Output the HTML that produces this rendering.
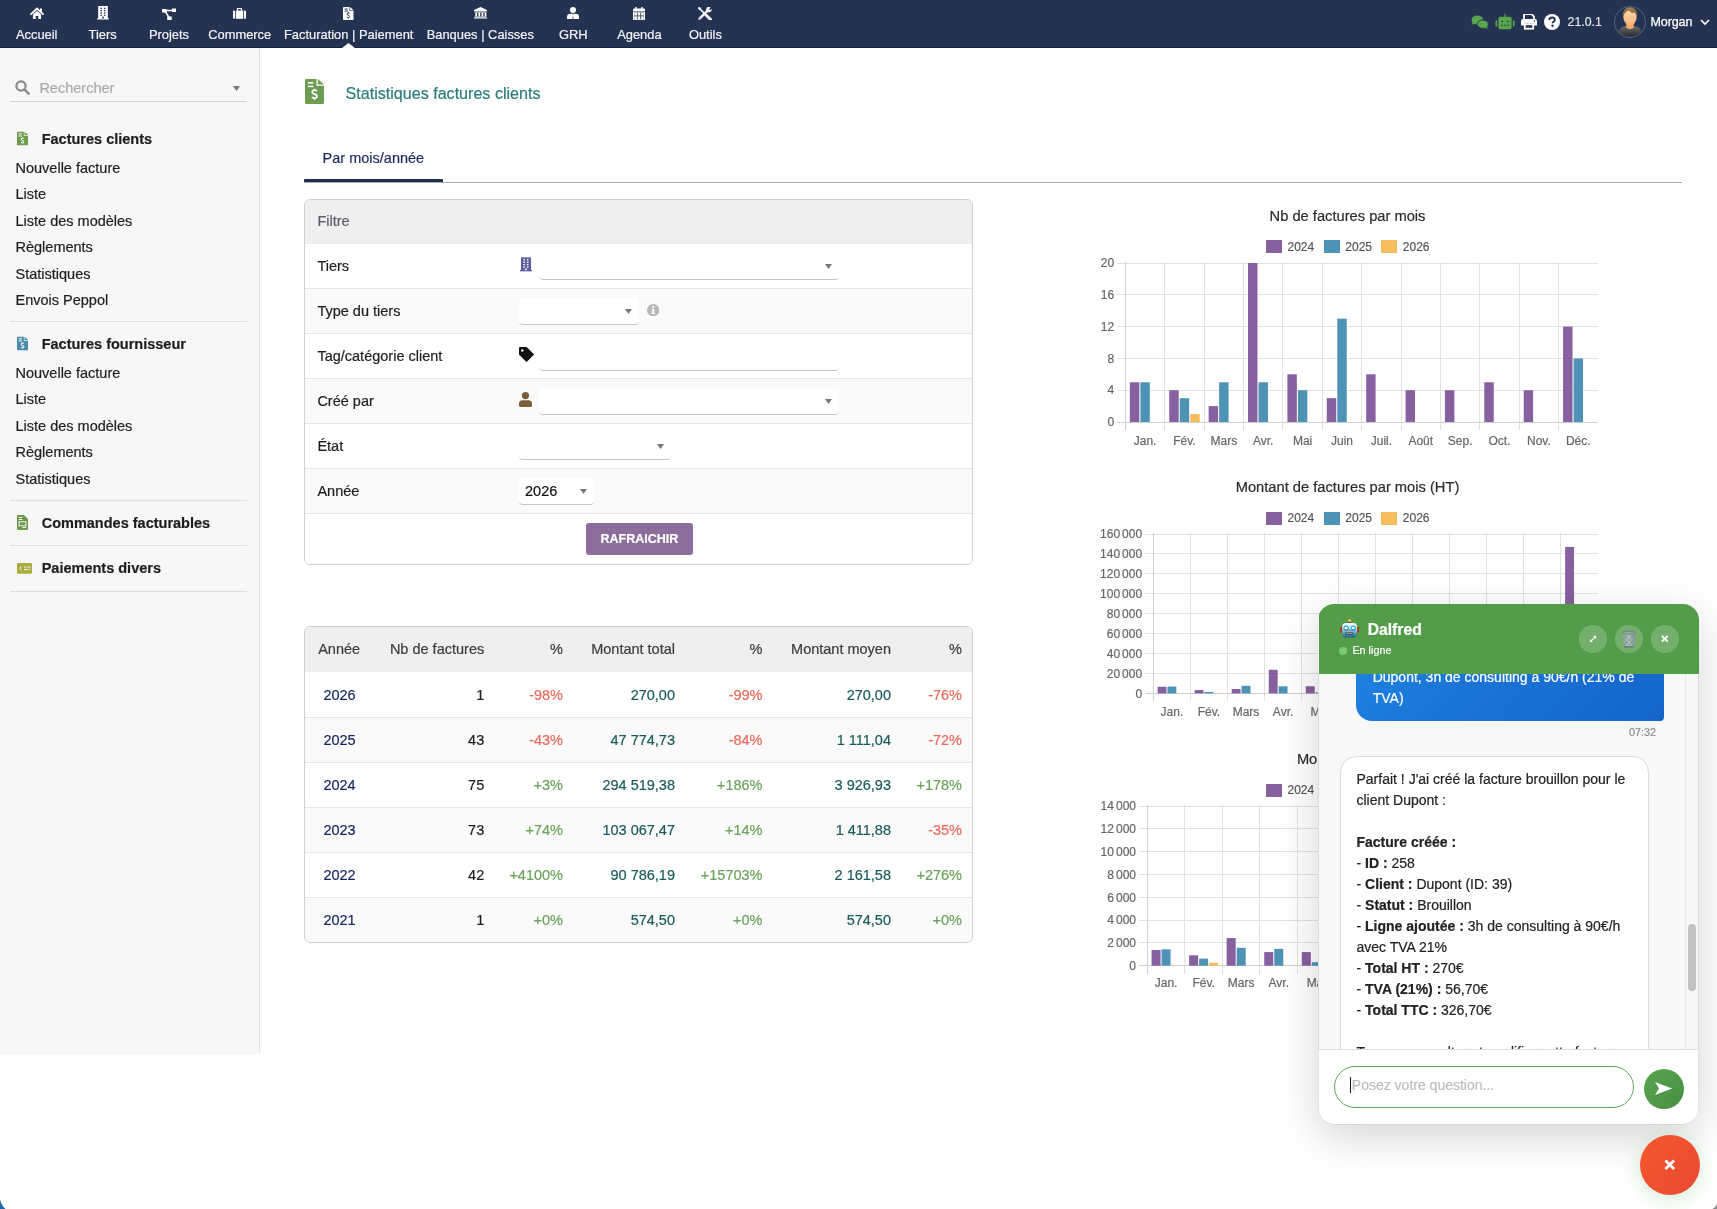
<!DOCTYPE html>
<html><head><meta charset="utf-8"><title>Statistiques factures clients</title>
<style>
*{box-sizing:border-box}
html,body{margin:0;padding:0;width:1717px;height:1209px;overflow:hidden;background:#fff;font-family:"Liberation Sans",sans-serif;position:relative}
.t{position:absolute;line-height:1;white-space:nowrap;-webkit-text-stroke:0.2px currentColor}
</style></head>
<body>
<div id="root" style="position:absolute;left:0;top:0;width:1717px;height:1209px;will-change:transform">
<div style="position:absolute;left:0px;top:0px;width:1717px;height:48px;background:#243352"></div>
<div style="position:absolute;left:0px;top:47px;width:1717px;height:1px;background:#15223f"></div>
<svg style="position:absolute;left:29.700000000000003px;top:7px;" width="14" height="12" viewBox="0 0 14 12"><path d="M1,7.2 L7,1.6 L13,7.2" fill="none" stroke="#fff" stroke-width="1.8" stroke-linecap="round"/><rect x="10" y="1.5" width="2" height="3.5" fill="#fff"/><path d="M3,7.3 L7,3.8 L11,7.3 V12 H8.3 V9 H5.7 V12 H3 Z" fill="#fff"/></svg>
<div class="t" style="left:-263.30px;width:600px;text-align:center;top:29px;font-size:12.9px;color:#f4f4f6;">Accueil</div>
<svg style="position:absolute;left:96.7px;top:6.4px;" width="12" height="13.5" viewBox="0 0 12 14"><rect x="1" y="0" width="10" height="13" fill="#fff"/><rect x="0" y="12.6" width="12" height="1.4" fill="#fff"/><rect x="3.3" y="1.8" width="1.6" height="1.3" fill="#243352"/><rect x="6.9" y="1.8" width="1.6" height="1.3" fill="#243352"/><rect x="3.3" y="4.2" width="1.6" height="1.3" fill="#243352"/><rect x="6.9" y="4.2" width="1.6" height="1.3" fill="#243352"/><rect x="3.3" y="6.6" width="1.6" height="1.3" fill="#243352"/><rect x="6.9" y="6.6" width="1.6" height="1.3" fill="#243352"/><rect x="3.3" y="9.0" width="1.6" height="1.3" fill="#243352"/><rect x="6.9" y="9.0" width="1.6" height="1.3" fill="#243352"/><rect x="5.2" y="11" width="1.6" height="2" fill="#243352"/></svg>
<div class="t" style="left:-197.30px;width:600px;text-align:center;top:29px;font-size:12.9px;color:#f4f4f6;">Tiers</div>
<svg style="position:absolute;left:161.75px;top:7.5px;" width="14.5" height="12" viewBox="0 0 14.5 12"><rect x="0" y="1" width="4.5" height="3.5" fill="#fff"/><rect x="10" y="0.5" width="4.5" height="3.5" fill="#fff"/><rect x="5.2" y="8.5" width="4.5" height="3.5" fill="#fff"/><path d="M3,3 L7,9.5 M4,2.5 H11" stroke="#fff" stroke-width="1.5"/></svg>
<div class="t" style="left:-131.00px;width:600px;text-align:center;top:29px;font-size:12.9px;color:#f4f4f6;">Projets</div>
<svg style="position:absolute;left:233.2px;top:8.2px;" width="13" height="11" viewBox="0 0 13 11"><path d="M4.5,2.5 V1.2 Q4.5,0.3 5.4,0.3 H7.6 Q8.5,0.3 8.5,1.2 V2.5" fill="none" stroke="#fff" stroke-width="1.3"/><rect x="0" y="2.5" width="2" height="8.3" rx="0.8" fill="#fff"/><rect x="2.8" y="2.5" width="7.4" height="8.3" fill="#fff"/><rect x="11" y="2.5" width="2" height="8.3" rx="0.8" fill="#fff"/></svg>
<div class="t" style="left:-60.30px;width:600px;text-align:center;top:29px;font-size:12.9px;color:#f4f4f6;">Commerce</div>
<svg style="position:absolute;left:343.45px;top:6.9px;" width="10.5" height="13" viewBox="0 0 10.5 13"><path d="M0,0.8 Q0,0 0.8,0 H6.5 V3.8 H10.5 V12.2 Q10.5,13 9.7,13 H0.8 Q0,13 0,12.2 Z" fill="#fff"/><path d="M7.2,0 L10.5,3.2 H7.2 Z" fill="#fff"/><rect x="1.6" y="1.6" width="3.2" height="1" fill="#243352"/><rect x="1.6" y="3.6" width="3.2" height="1" fill="#243352"/><path d="M6.6,6.6 Q6.3,6 5.3,6 Q4,6 4,7.1 Q4,8 5.3,8.3 Q6.6,8.6 6.6,9.5 Q6.6,10.6 5.3,10.6 Q4.2,10.6 3.9,9.9 M5.3,5.2 V6 M5.3,10.6 V11.5" fill="none" stroke="#243352" stroke-width="1"/></svg>
<div class="t" style="left:48.70px;width:600px;text-align:center;top:29px;font-size:12.9px;color:#f4f4f6;">Facturation | Paiement</div>
<svg style="position:absolute;left:473.8px;top:7.4px;" width="13" height="11.5" viewBox="0 0 13 11.5"><path d="M6.5,0 L13,3 V4 H0 V3 Z" fill="#fff"/><rect x="0.5" y="4.4" width="12" height="1" fill="#fff"/><rect x="1.3" y="5.5" width="1.8" height="4" fill="#fff"/><rect x="4.4" y="5.5" width="1.8" height="4" fill="#fff"/><rect x="7.5" y="5.5" width="1.8" height="4" fill="#fff"/><rect x="10.600000000000001" y="5.5" width="1.8" height="4" fill="#fff"/><rect x="0.5" y="9.6" width="12" height="0.9" fill="#fff"/><rect x="0" y="10.6" width="13" height="0.9" fill="#fff"/></svg>
<div class="t" style="left:180.30px;width:600px;text-align:center;top:29px;font-size:12.9px;color:#f4f4f6;">Banques | Caisses</div>
<svg style="position:absolute;left:567.3px;top:7px;" width="12" height="12" viewBox="0 0 12 12"><circle cx="6" cy="3" r="3" fill="#fff"/><path d="M0,12 V10 Q0,6.7 3.5,6.7 H8.5 Q12,6.7 12,10 V12 Z" fill="#fff"/><path d="M5.4,7 L6,8 L5.5,11.5 L6,12 L6.5,11.5 L6,8 L6.6,7 Z" fill="#243352"/></svg>
<div class="t" style="left:273.30px;width:600px;text-align:center;top:29px;font-size:12.9px;color:#f4f4f6;">GRH</div>
<svg style="position:absolute;left:633.4px;top:6.5px;" width="12" height="13.3" viewBox="0 0 12 13.3"><rect x="2.1" y="0" width="1.7" height="2.8" rx="0.6" fill="#fff"/><rect x="8.2" y="0" width="1.7" height="2.8" rx="0.6" fill="#fff"/><rect x="0" y="1.4" width="12" height="11.9" rx="1.1" fill="#fff"/><rect x="0" y="4.1" width="12" height="0.7" fill="#243352" opacity="0.75"/><rect x="3.9" y="5.6" width="0.75" height="6.6" fill="#243352"/><rect x="7.35" y="5.6" width="0.75" height="6.6" fill="#243352"/><rect x="1" y="8.55" width="10" height="0.75" fill="#243352"/><rect x="1" y="5.5" width="10" height="0.5" fill="#243352" opacity="0.6"/><rect x="1" y="11.9" width="10" height="0.4" fill="#243352" opacity="0.5"/><rect x="1" y="5.5" width="0.45" height="6.8" fill="#243352" opacity="0.5"/><rect x="10.55" y="5.5" width="0.45" height="6.8" fill="#243352" opacity="0.5"/></svg>
<div class="t" style="left:339.40px;width:600px;text-align:center;top:29px;font-size:12.9px;color:#f4f4f6;">Agenda</div>
<svg style="position:absolute;left:698.4px;top:6.5px;" width="14" height="13.3" viewBox="0 0 14 13.3"><path d="M0.9,0.9 L7.2,7.2" stroke="#fff" stroke-width="1.5" stroke-linecap="round"/><path d="M0.3,1.8 L1.8,0.3 L3.2,1.2 L1.2,3.2 Z" fill="#fff"/><path d="M8,8 L12.6,12.6" stroke="#fff" stroke-width="2.8" stroke-linecap="round"/><path d="M1.6,11.7 L9.6,3.7" stroke="#fff" stroke-width="2.4" stroke-linecap="round"/><circle cx="10.9" cy="2.6" r="2.7" fill="#fff"/><path d="M11.2,2.3 L12.8,-0.2 L14.5,1.5 L12,3.1 Z" fill="#243352"/><circle cx="2" cy="11.3" r="0.5" fill="#243352"/></svg>
<div class="t" style="left:405.40px;width:600px;text-align:center;top:29px;font-size:12.9px;color:#f4f4f6;">Outils</div>
<svg style="position:absolute;left:342px;top:43px" width="13" height="5" viewBox="0 0 13 5"><path d="M0,5 L6.5,0 L13,5 Z" fill="#fff"/></svg>
<svg style="position:absolute;left:1471px;top:14.5px" width="18" height="14" viewBox="0 0 18 14"><ellipse cx="6.3" cy="5" rx="5.8" ry="4.6" fill="#58a64c"/><path d="M1.6,7.6 L0.2,9.6 L4.2,8.9 Z" fill="#58a64c"/><ellipse cx="11.8" cy="9.2" rx="5.6" ry="4.2" fill="#58a64c" stroke="#243352" stroke-width="1"/><path d="M15.5,11.5 L17.2,13.8 L13,12.8 Z" fill="#58a64c"/></svg>
<svg style="position:absolute;left:1494.5px;top:14px" width="20" height="15.5" viewBox="0 0 20 15.5"><rect x="3.4" y="2.8" width="13.2" height="12.4" rx="1.6" fill="#58a64c"/><rect x="9.4" y="0" width="1.2" height="3" fill="#58a64c"/><path d="M0.4,7.6 Q0.4,6.4 1.6,6.2 H2.2 V12.6 H1.6 Q0.4,12.4 0.4,11.2 Z" fill="#58a64c"/><path d="M19.6,7.6 Q19.6,6.4 18.4,6.2 H17.8 V12.6 H18.4 Q19.6,12.4 19.6,11.2 Z" fill="#58a64c"/><path d="M7.2,6.6 L8.2,7.6 L7.2,8.6 L6.2,7.6 Z" fill="#243352"/><path d="M12.8,6.6 L13.8,7.6 L12.8,8.6 L11.8,7.6 Z" fill="#243352"/><rect x="6" y="10.8" width="1.8" height="0.9" fill="#243352"/><rect x="9.1" y="10.8" width="1.8" height="0.9" fill="#243352"/><rect x="12.2" y="10.8" width="1.8" height="0.9" fill="#243352"/></svg>
<svg style="position:absolute;left:1521px;top:14.4px" width="16" height="15.6" viewBox="0 0 16 15.6"><path d="M3,5 V1.2 Q3,0 4.2,0 H10.5 L13,2.5 V5" fill="none" stroke="#fff" stroke-width="1.8"/><path d="M0,7 Q0,5 2,5 H14 Q16,5 16,7 V11.5 H13 V9.5 H3 V11.5 H0 Z" fill="#fff"/><rect x="3.8" y="10.3" width="8.4" height="4.4" fill="none" stroke="#fff" stroke-width="1.8"/><circle cx="13.5" cy="7" r="0.8" fill="#243352"/></svg>
<svg style="position:absolute;left:1544px;top:14.2px" width="16" height="16" viewBox="0 0 16 16"><circle cx="8" cy="8" r="8" fill="#fff"/><path d="M5.3,6 Q5.3,3.4 8,3.4 Q10.8,3.4 10.8,5.8 Q10.8,7.2 9.2,8 Q8.6,8.4 8.6,9.3" fill="none" stroke="#243352" stroke-width="2"/><circle cx="8.5" cy="11.8" r="1.2" fill="#243352"/></svg>
<div class="t" style="left:1567.60px;top:16px;font-size:12.3px;color:#e4e6ea;">21.0.1</div>
<svg style="position:absolute;left:1614px;top:6px" width="32" height="32" viewBox="0 0 32 32"><defs><clipPath id="avc"><circle cx="16" cy="16" r="15.6"/></clipPath><linearGradient id="skin" x1="0" y1="0" x2="0" y2="1"><stop offset="0" stop-color="#fdd7ad"/><stop offset="1" stop-color="#f6b374"/></linearGradient><linearGradient id="hair" x1="0" y1="0" x2="0" y2="1"><stop offset="0" stop-color="#a07e4e"/><stop offset="1" stop-color="#7d6036"/></linearGradient><linearGradient id="shirt" x1="0" y1="0" x2="0" y2="1"><stop offset="0" stop-color="#6b6b6b"/><stop offset="1" stop-color="#2e2e2e"/></linearGradient></defs><g clip-path="url(#avc)"><path d="M3.5,30 Q3.5,21.5 11,20 H21 Q28.5,21.5 28.5,30 Z" fill="url(#shirt)"/><path d="M12.2,16 H19.8 V21.8 Q16,24.5 12.2,21.8 Z" fill="#f1aa6c"/><ellipse cx="16" cy="8.3" rx="7.2" ry="6.3" fill="url(#hair)"/><ellipse cx="16" cy="11.6" rx="6.6" ry="7.6" fill="url(#skin)"/><path d="M9.2,11 Q8.6,1.2 16,1.2 Q23.4,1.2 22.9,11 Q22,7 19.5,6.2 Q18.3,8.5 15.5,4.8 Q13,4.2 11.5,6.3 Q9.8,8 9.2,11 Z" fill="url(#hair)"/></g><circle cx="16" cy="16" r="15.6" fill="none" stroke="#55658a" stroke-width="0.9"/></svg>
<div class="t" style="left:1650.50px;top:16px;font-size:12.5px;color:#fff;letter-spacing:-0.1px;-webkit-text-stroke:0.25px #fff;">Morgan</div>
<svg style="position:absolute;left:1700px;top:19px" width="10" height="6.5" viewBox="0 0 10 6.5"><path d="M1,1 L5,5 L9,1" fill="none" stroke="#fff" stroke-width="1.6"/></svg>
<div style="position:absolute;left:0px;top:48px;width:260px;height:1005px;background:#f7f7f7;border-right:1px solid #e0e0e0;box-shadow:0 1px 3px rgba(0,0,0,0.06)"></div>
<svg style="position:absolute;left:15px;top:80px" width="15" height="15" viewBox="0 0 15 15"><circle cx="6" cy="6" r="4.6" fill="none" stroke="#8a8a8a" stroke-width="2.2"/><path d="M9.4,9.4 L13.6,13.6" stroke="#8a8a8a" stroke-width="2.6" stroke-linecap="round"/></svg>
<div class="t" style="left:39.40px;top:81px;font-size:14.5px;color:#aaaaaa;">Rechercher</div>
<svg style="position:absolute;left:232.5px;top:86px" width="7" height="5" viewBox="0 0 7 5"><path d="M0,0 H7 L3.5,5 Z" fill="#777"/></svg>
<div style="position:absolute;left:9.5px;top:100.5px;width:237px;height:1px;background:#d4d4d4"></div>
<svg style="position:absolute;left:17.0px;top:131.1px;" width="11" height="15" viewBox="0 0 10.5 13"><path d="M0,0.8 Q0,0 0.8,0 H6.5 V3.8 H10.5 V12.2 Q10.5,13 9.7,13 H0.8 Q0,13 0,12.2 Z" fill="#6b9a48"/><path d="M7.2,0 L10.5,3.2 H7.2 Z" fill="#6b9a48"/><rect x="1.6" y="1.6" width="3.2" height="1" fill="#f7f7f7"/><rect x="1.6" y="3.6" width="3.2" height="1" fill="#f7f7f7"/><path d="M6.6,6.6 Q6.3,6 5.3,6 Q4,6 4,7.1 Q4,8 5.3,8.3 Q6.6,8.6 6.6,9.5 Q6.6,10.6 5.3,10.6 Q4.2,10.6 3.9,9.9 M5.3,5.2 V6 M5.3,10.6 V11.5" fill="none" stroke="#f7f7f7" stroke-width="1"/></svg>
<div class="t" style="left:41.70px;top:132px;font-size:14.5px;color:#1e1e1e;font-weight:700;">Factures clients</div>
<div class="t" style="left:15.50px;top:161px;font-size:14.5px;color:#1e1e1e;">Nouvelle facture</div>
<div class="t" style="left:15.50px;top:187px;font-size:14.5px;color:#1e1e1e;">Liste</div>
<div class="t" style="left:15.50px;top:214px;font-size:14.5px;color:#1e1e1e;">Liste des modèles</div>
<div class="t" style="left:15.50px;top:240px;font-size:14.5px;color:#1e1e1e;">Règlements</div>
<div class="t" style="left:15.50px;top:267px;font-size:14.5px;color:#1e1e1e;">Statistiques</div>
<div class="t" style="left:15.50px;top:293px;font-size:14.5px;color:#1e1e1e;">Envois Peppol</div>
<div style="position:absolute;left:9.5px;top:320.5px;width:237px;height:1px;background:#dedede"></div>
<svg style="position:absolute;left:17.0px;top:336.0px;" width="11" height="15" viewBox="0 0 10.5 13"><path d="M0,0.8 Q0,0 0.8,0 H6.5 V3.8 H10.5 V12.2 Q10.5,13 9.7,13 H0.8 Q0,13 0,12.2 Z" fill="#4a8cab"/><path d="M7.2,0 L10.5,3.2 H7.2 Z" fill="#4a8cab"/><rect x="1.6" y="1.6" width="3.2" height="1" fill="#f7f7f7"/><rect x="1.6" y="3.6" width="3.2" height="1" fill="#f7f7f7"/><path d="M6.6,6.6 Q6.3,6 5.3,6 Q4,6 4,7.1 Q4,8 5.3,8.3 Q6.6,8.6 6.6,9.5 Q6.6,10.6 5.3,10.6 Q4.2,10.6 3.9,9.9 M5.3,5.2 V6 M5.3,10.6 V11.5" fill="none" stroke="#f7f7f7" stroke-width="1"/></svg>
<div class="t" style="left:41.70px;top:337px;font-size:14.5px;color:#1e1e1e;font-weight:700;">Factures fournisseur</div>
<div class="t" style="left:15.50px;top:366px;font-size:14.5px;color:#1e1e1e;">Nouvelle facture</div>
<div class="t" style="left:15.50px;top:392px;font-size:14.5px;color:#1e1e1e;">Liste</div>
<div class="t" style="left:15.50px;top:419px;font-size:14.5px;color:#1e1e1e;">Liste des modèles</div>
<div class="t" style="left:15.50px;top:445px;font-size:14.5px;color:#1e1e1e;">Règlements</div>
<div class="t" style="left:15.50px;top:472px;font-size:14.5px;color:#1e1e1e;">Statistiques</div>
<div style="position:absolute;left:9.5px;top:499.7px;width:237px;height:1px;background:#dedede"></div>
<svg style="position:absolute;left:17px;top:514.5px" width="11" height="15" viewBox="0 0 11 15"><path d="M0,1 Q0,0 1,0 H7 L11,4 V14 Q11,15 10,15 H1 Q0,15 0,14 Z" fill="#6b9a48"/><rect x="1.8" y="2" width="3.5" height="1" fill="#f7f7f7"/><rect x="1.8" y="4" width="3.5" height="1" fill="#f7f7f7"/><rect x="2" y="6.8" width="7" height="4" fill="none" stroke="#f7f7f7" stroke-width="1"/><rect x="5.5" y="12" width="3.5" height="1" fill="#f7f7f7"/></svg>
<div class="t" style="left:41.70px;top:516px;font-size:14.5px;color:#1e1e1e;font-weight:700;">Commandes facturables</div>
<div style="position:absolute;left:9.5px;top:544.6px;width:237px;height:1px;background:#dedede"></div>
<svg style="position:absolute;left:17px;top:563.2px" width="15" height="10.8" viewBox="0 0 15 10.8"><rect x="0" y="0" width="15" height="10.8" rx="1.2" fill="#a7ae3f"/><path d="M4.2,3.2 L3,5.4 L4.2,7.6" fill="none" stroke="#f7f7f7" stroke-width="0.9"/><rect x="7" y="3.6" width="2" height="1" fill="#f7f7f7"/><rect x="9.8" y="3.6" width="3.6" height="1" fill="#f7f7f7"/><rect x="7" y="5.9" width="3.6" height="1" fill="#f7f7f7"/><rect x="11.4" y="5.9" width="2" height="1" fill="#f7f7f7"/></svg>
<div class="t" style="left:41.70px;top:561px;font-size:14.5px;color:#1e1e1e;font-weight:700;">Paiements divers</div>
<div style="position:absolute;left:9.5px;top:590.5px;width:237px;height:1px;background:#dedede"></div>
<svg style="position:absolute;left:305px;top:79px" width="19" height="25" viewBox="0 0 19 25"><path d="M0,1.2 Q0,0 1.2,0 H11.5 V6.8 H19 V23.8 Q19,25 17.8,25 H1.2 Q0,25 0,23.8 Z" fill="#6e9b52"/><path d="M12.8,0 L19,5.6 H12.8 Z" fill="#6e9b52"/><rect x="2.8" y="3" width="5.5" height="1.6" fill="#fff"/><rect x="2.8" y="6.6" width="5.5" height="1.6" fill="#fff"/><path d="M11.8,12.4 Q11.3,11.2 9.6,11.2 Q7.3,11.2 7.3,13 Q7.3,14.6 9.6,15.1 Q11.9,15.6 11.9,17.2 Q11.9,19.1 9.6,19.1 Q7.6,19.1 7.1,17.9 M9.6,9.7 V11.2 M9.6,19.1 V20.8" fill="none" stroke="#fff" stroke-width="1.7"/></svg>
<div class="t" style="left:345.50px;top:85px;font-size:16.1px;color:#297b7d;">Statistiques factures clients</div>
<div class="t" style="left:322.60px;top:151px;font-size:14.5px;color:#1d2a5e;">Par mois/année</div>
<div style="position:absolute;left:304px;top:182px;width:1378px;height:1px;background:#aaaaaa"></div>
<div style="position:absolute;left:304px;top:179px;width:139px;height:3.2px;background:#1f2f4d;border-radius:1px 1px 0 0"></div>
<div style="position:absolute;left:304px;top:199px;width:669px;height:366px;border:1px solid #cfcfcf;border-radius:6px;background:#fff"></div>
<div style="position:absolute;left:305px;top:200px;width:667px;height:44px;background:#efefef;border-radius:5px 5px 0 0"></div>
<div class="t" style="left:317.40px;top:214px;font-size:14.5px;color:#5c5c6c;">Filtre</div>
<div style="position:absolute;left:305px;top:244px;width:667px;height:44px;background:#ffffff"></div>
<div class="t" style="left:317.40px;top:259px;font-size:14.5px;color:#1e1e1e;">Tiers</div>
<div style="position:absolute;left:305px;top:288px;width:667px;height:45px;background:#fafafa;border-top:1px solid #e6e6e6"></div>
<div class="t" style="left:317.40px;top:304px;font-size:14.5px;color:#1e1e1e;">Type du tiers</div>
<div style="position:absolute;left:305px;top:333px;width:667px;height:45px;background:#ffffff;border-top:1px solid #e6e6e6"></div>
<div class="t" style="left:317.40px;top:349px;font-size:14.5px;color:#1e1e1e;">Tag/catégorie client</div>
<div style="position:absolute;left:305px;top:378px;width:667px;height:45px;background:#fafafa;border-top:1px solid #e6e6e6"></div>
<div class="t" style="left:317.40px;top:394px;font-size:14.5px;color:#1e1e1e;">Créé par</div>
<div style="position:absolute;left:305px;top:423px;width:667px;height:45px;background:#ffffff;border-top:1px solid #e6e6e6"></div>
<div class="t" style="left:317.40px;top:439px;font-size:14.5px;color:#1e1e1e;">État</div>
<div style="position:absolute;left:305px;top:468px;width:667px;height:45px;background:#fafafa;border-top:1px solid #e6e6e6"></div>
<div class="t" style="left:317.40px;top:484px;font-size:14.5px;color:#1e1e1e;">Année</div>
<div style="position:absolute;left:305px;top:513px;width:667px;height:51px;background:#fff;border-top:1px solid #e6e6e6;border-radius:0 0 5px 5px"></div>
<svg style="position:absolute;left:519.5px;top:257px;" width="12" height="14.7" viewBox="0 0 12 14"><rect x="1" y="0" width="10" height="13" fill="#5a5e9e"/><rect x="0" y="12.6" width="12" height="1.4" fill="#5a5e9e"/><rect x="3.3" y="1.8" width="1.6" height="1.3" fill="#ffffff"/><rect x="6.9" y="1.8" width="1.6" height="1.3" fill="#ffffff"/><rect x="3.3" y="4.2" width="1.6" height="1.3" fill="#ffffff"/><rect x="6.9" y="4.2" width="1.6" height="1.3" fill="#ffffff"/><rect x="3.3" y="6.6" width="1.6" height="1.3" fill="#ffffff"/><rect x="6.9" y="6.6" width="1.6" height="1.3" fill="#ffffff"/><rect x="3.3" y="9.0" width="1.6" height="1.3" fill="#ffffff"/><rect x="6.9" y="9.0" width="1.6" height="1.3" fill="#ffffff"/><rect x="5.2" y="11" width="1.6" height="2" fill="#ffffff"/></svg>
<div style="position:absolute;left:539px;top:252px;width:299.5px;height:28px;background:#fff;border-radius:4px;border-bottom:1px solid #c6c6c6"></div>
<svg style="position:absolute;left:824.5px;top:263.5px" width="7" height="5" viewBox="0 0 7 5"><path d="M0,0 H7 L3.5,5 Z" fill="#777"/></svg>
<div style="position:absolute;left:519px;top:297px;width:119.5px;height:28px;background:#fff;border-radius:4px;border-bottom:1px solid #c6c6c6"></div>
<svg style="position:absolute;left:624.5px;top:308.5px" width="7" height="5" viewBox="0 0 7 5"><path d="M0,0 H7 L3.5,5 Z" fill="#777"/></svg>
<svg style="position:absolute;left:646.5px;top:303.8px" width="12.4" height="12.4" viewBox="0 0 12 12"><circle cx="6" cy="6" r="6" fill="#b9b9b9"/><circle cx="6" cy="3" r="1.1" fill="#fff"/><rect x="5" y="4.8" width="2" height="4.6" fill="#fff"/><rect x="4.3" y="8.6" width="3.4" height="1" fill="#fff"/></svg>
<svg style="position:absolute;left:519px;top:347px" width="15" height="15" viewBox="0 0 15 15"><path d="M1,0 H7.2 Q7.7,0 8.1,0.4 L14.6,6.9 Q15.1,7.5 14.6,8.1 L8.1,14.6 Q7.5,15.1 6.9,14.6 L0.4,8.1 Q0,7.7 0,7.2 V1 Q0,0 1,0 Z" fill="#111"/><circle cx="3.3" cy="3.4" r="1.25" fill="#fff"/></svg>
<div style="position:absolute;left:539px;top:343px;width:299.5px;height:28px;background:#fff;border-radius:4px;border-bottom:1px solid #c6c6c6"></div>
<svg style="position:absolute;left:519px;top:392px" width="13" height="15" viewBox="0 0 13 15"><circle cx="6.5" cy="3.6" r="3.6" fill="#7a5d39"/><path d="M0,13.6 V12 Q0,8.3 3.5,8.3 H9.5 Q13,8.3 13,12 V13.6 Q13,15 11.6,15 H1.4 Q0,15 0,13.6 Z" fill="#7a5d39"/></svg>
<div style="position:absolute;left:539px;top:387.5px;width:299.5px;height:27.5px;background:#fff;border-radius:4px;border-bottom:1px solid #c6c6c6"></div>
<svg style="position:absolute;left:824.5px;top:398.5px" width="7" height="5" viewBox="0 0 7 5"><path d="M0,0 H7 L3.5,5 Z" fill="#777"/></svg>
<div style="position:absolute;left:519px;top:432px;width:152.4px;height:28px;background:#fff;border-radius:4px;border-bottom:1px solid #c6c6c6"></div>
<svg style="position:absolute;left:657.2px;top:443.5px" width="7" height="5" viewBox="0 0 7 5"><path d="M0,0 H7 L3.5,5 Z" fill="#777"/></svg>
<div style="position:absolute;left:519px;top:477.4px;width:74.8px;height:27.6px;background:#fff;border-radius:4px;border-bottom:1px solid #c6c6c6"></div>
<div class="t" style="left:525.00px;top:484px;font-size:14.5px;color:#111;">2026</div>
<svg style="position:absolute;left:579.5px;top:488.5px" width="7" height="5" viewBox="0 0 7 5"><path d="M0,0 H7 L3.5,5 Z" fill="#777"/></svg>
<div style="position:absolute;left:586px;top:523px;width:107px;height:31.8px;background:#8c6d9b;border-radius:3px"></div>
<div class="t" style="left:339.40px;width:600px;text-align:center;top:533px;font-size:12.5px;color:#fff;font-weight:700;">RAFRAICHIR</div>
<div style="position:absolute;left:304px;top:626px;width:669px;height:317px;border:1px solid #cfcfcf;border-radius:6px;background:#fff"></div>
<div style="position:absolute;left:305px;top:627px;width:667px;height:45px;background:#efefef;border-radius:5px 5px 0 0"></div>
<div class="t" style="left:318.20px;top:642px;font-size:14.5px;color:#3c3c3c;">Année</div>
<div class="t" style="right:1232.80px;top:642px;font-size:14.5px;color:#3c3c3c;">Nb de factures</div>
<div class="t" style="right:1154.00px;top:642px;font-size:14.5px;color:#3c3c3c;">%</div>
<div class="t" style="right:1042.00px;top:642px;font-size:14.5px;color:#3c3c3c;">Montant total</div>
<div class="t" style="right:954.50px;top:642px;font-size:14.5px;color:#3c3c3c;">%</div>
<div class="t" style="right:826.00px;top:642px;font-size:14.5px;color:#3c3c3c;">Montant moyen</div>
<div class="t" style="right:755.00px;top:642px;font-size:14.5px;color:#3c3c3c;">%</div>
<div style="position:absolute;left:305px;top:672px;width:667px;height:45px;background:#ffffff"></div>
<div class="t" style="left:323.40px;top:688px;font-size:14.5px;color:#14245f;">2026</div>
<div class="t" style="right:1232.80px;top:688px;font-size:14.5px;color:#1e1e1e;">1</div>
<div class="t" style="right:1154.00px;top:688px;font-size:14.5px;color:#e86b5b;">-98%</div>
<div class="t" style="right:1042.00px;top:688px;font-size:14.5px;color:#1a5a5a;">270,00</div>
<div class="t" style="right:954.50px;top:688px;font-size:14.5px;color:#e86b5b;">-99%</div>
<div class="t" style="right:826.00px;top:688px;font-size:14.5px;color:#1a5a5a;">270,00</div>
<div class="t" style="right:755.00px;top:688px;font-size:14.5px;color:#e86b5b;">-76%</div>
<div style="position:absolute;left:305px;top:717px;width:667px;height:45px;background:#fafafa;border-top:1px solid #e6e6e6"></div>
<div class="t" style="left:323.40px;top:733px;font-size:14.5px;color:#14245f;">2025</div>
<div class="t" style="right:1232.80px;top:733px;font-size:14.5px;color:#1e1e1e;">43</div>
<div class="t" style="right:1154.00px;top:733px;font-size:14.5px;color:#e86b5b;">-43%</div>
<div class="t" style="right:1042.00px;top:733px;font-size:14.5px;color:#1a5a5a;">47 774,73</div>
<div class="t" style="right:954.50px;top:733px;font-size:14.5px;color:#e86b5b;">-84%</div>
<div class="t" style="right:826.00px;top:733px;font-size:14.5px;color:#1a5a5a;">1 111,04</div>
<div class="t" style="right:755.00px;top:733px;font-size:14.5px;color:#e86b5b;">-72%</div>
<div style="position:absolute;left:305px;top:762px;width:667px;height:45px;background:#ffffff;border-top:1px solid #e6e6e6"></div>
<div class="t" style="left:323.40px;top:778px;font-size:14.5px;color:#14245f;">2024</div>
<div class="t" style="right:1232.80px;top:778px;font-size:14.5px;color:#1e1e1e;">75</div>
<div class="t" style="right:1154.00px;top:778px;font-size:14.5px;color:#6aa35a;">+3%</div>
<div class="t" style="right:1042.00px;top:778px;font-size:14.5px;color:#1a5a5a;">294 519,38</div>
<div class="t" style="right:954.50px;top:778px;font-size:14.5px;color:#6aa35a;">+186%</div>
<div class="t" style="right:826.00px;top:778px;font-size:14.5px;color:#1a5a5a;">3 926,93</div>
<div class="t" style="right:755.00px;top:778px;font-size:14.5px;color:#6aa35a;">+178%</div>
<div style="position:absolute;left:305px;top:807px;width:667px;height:45px;background:#fafafa;border-top:1px solid #e6e6e6"></div>
<div class="t" style="left:323.40px;top:823px;font-size:14.5px;color:#14245f;">2023</div>
<div class="t" style="right:1232.80px;top:823px;font-size:14.5px;color:#1e1e1e;">73</div>
<div class="t" style="right:1154.00px;top:823px;font-size:14.5px;color:#6aa35a;">+74%</div>
<div class="t" style="right:1042.00px;top:823px;font-size:14.5px;color:#1a5a5a;">103 067,47</div>
<div class="t" style="right:954.50px;top:823px;font-size:14.5px;color:#6aa35a;">+14%</div>
<div class="t" style="right:826.00px;top:823px;font-size:14.5px;color:#1a5a5a;">1 411,88</div>
<div class="t" style="right:755.00px;top:823px;font-size:14.5px;color:#e86b5b;">-35%</div>
<div style="position:absolute;left:305px;top:852px;width:667px;height:45px;background:#ffffff;border-top:1px solid #e6e6e6"></div>
<div class="t" style="left:323.40px;top:868px;font-size:14.5px;color:#14245f;">2022</div>
<div class="t" style="right:1232.80px;top:868px;font-size:14.5px;color:#1e1e1e;">42</div>
<div class="t" style="right:1154.00px;top:868px;font-size:14.5px;color:#6aa35a;">+4100%</div>
<div class="t" style="right:1042.00px;top:868px;font-size:14.5px;color:#1a5a5a;">90 786,19</div>
<div class="t" style="right:954.50px;top:868px;font-size:14.5px;color:#6aa35a;">+15703%</div>
<div class="t" style="right:826.00px;top:868px;font-size:14.5px;color:#1a5a5a;">2 161,58</div>
<div class="t" style="right:755.00px;top:868px;font-size:14.5px;color:#6aa35a;">+276%</div>
<div style="position:absolute;left:305px;top:897px;width:667px;height:45px;background:#fafafa;border-top:1px solid #e6e6e6;border-radius:0 0 5px 5px"></div>
<div class="t" style="left:323.40px;top:913px;font-size:14.5px;color:#14245f;">2021</div>
<div class="t" style="right:1232.80px;top:913px;font-size:14.5px;color:#1e1e1e;">1</div>
<div class="t" style="right:1154.00px;top:913px;font-size:14.5px;color:#6aa35a;">+0%</div>
<div class="t" style="right:1042.00px;top:913px;font-size:14.5px;color:#1a5a5a;">574,50</div>
<div class="t" style="right:954.50px;top:913px;font-size:14.5px;color:#6aa35a;">+0%</div>
<div class="t" style="right:826.00px;top:913px;font-size:14.5px;color:#1a5a5a;">574,50</div>
<div class="t" style="right:755.00px;top:913px;font-size:14.5px;color:#6aa35a;">+0%</div>
<div class="t" style="left:1047.50px;width:600px;text-align:center;top:209px;font-size:14.7px;color:#2b2b2b;">Nb de factures par mois</div>
<div style="position:absolute;left:1266px;top:240.4px;width:16px;height:13px;background:#8760a0"></div>
<div class="t" style="left:1287.50px;top:241px;font-size:12px;color:#555;">2024</div>
<div style="position:absolute;left:1323.5px;top:240.4px;width:16px;height:13px;background:#4e93b6"></div>
<div class="t" style="left:1345.30px;top:241px;font-size:12px;color:#555;">2025</div>
<div style="position:absolute;left:1381.3px;top:240.4px;width:16px;height:13px;background:#f5bd5e"></div>
<div class="t" style="left:1402.80px;top:241px;font-size:12px;color:#555;">2026</div>
<svg style="position:absolute;left:0;top:0" width="1717" height="1209" viewBox="0 0 1717 1209"><line x1="1117.4" y1="422.5" x2="1598.0" y2="422.5" stroke="#e2e2e2" stroke-width="1" shape-rendering="crispEdges"/><line x1="1117.4" y1="390.5" x2="1598.0" y2="390.5" stroke="#e2e2e2" stroke-width="1" shape-rendering="crispEdges"/><line x1="1117.4" y1="358.5" x2="1598.0" y2="358.5" stroke="#e2e2e2" stroke-width="1" shape-rendering="crispEdges"/><line x1="1117.4" y1="326.5" x2="1598.0" y2="326.5" stroke="#e2e2e2" stroke-width="1" shape-rendering="crispEdges"/><line x1="1117.4" y1="294.5" x2="1598.0" y2="294.5" stroke="#e2e2e2" stroke-width="1" shape-rendering="crispEdges"/><line x1="1117.4" y1="263.5" x2="1598.0" y2="263.5" stroke="#e2e2e2" stroke-width="1" shape-rendering="crispEdges"/><line x1="1125.5" y1="262" x2="1125.5" y2="430" stroke="#e2e2e2" stroke-width="1" shape-rendering="crispEdges"/><line x1="1164.5" y1="262" x2="1164.5" y2="430" stroke="#e2e2e2" stroke-width="1" shape-rendering="crispEdges"/><line x1="1204.5" y1="262" x2="1204.5" y2="430" stroke="#e2e2e2" stroke-width="1" shape-rendering="crispEdges"/><line x1="1243.5" y1="262" x2="1243.5" y2="430" stroke="#e2e2e2" stroke-width="1" shape-rendering="crispEdges"/><line x1="1282.5" y1="262" x2="1282.5" y2="430" stroke="#e2e2e2" stroke-width="1" shape-rendering="crispEdges"/><line x1="1322.5" y1="262" x2="1322.5" y2="430" stroke="#e2e2e2" stroke-width="1" shape-rendering="crispEdges"/><line x1="1361.5" y1="262" x2="1361.5" y2="430" stroke="#e2e2e2" stroke-width="1" shape-rendering="crispEdges"/><line x1="1401.5" y1="262" x2="1401.5" y2="430" stroke="#e2e2e2" stroke-width="1" shape-rendering="crispEdges"/><line x1="1440.5" y1="262" x2="1440.5" y2="430" stroke="#e2e2e2" stroke-width="1" shape-rendering="crispEdges"/><line x1="1479.5" y1="262" x2="1479.5" y2="430" stroke="#e2e2e2" stroke-width="1" shape-rendering="crispEdges"/><line x1="1519.5" y1="262" x2="1519.5" y2="430" stroke="#e2e2e2" stroke-width="1" shape-rendering="crispEdges"/><line x1="1558.5" y1="262" x2="1558.5" y2="430" stroke="#e2e2e2" stroke-width="1" shape-rendering="crispEdges"/><line x1="1125.5" y1="262" x2="1125.5" y2="430" stroke="#d0d0d0" stroke-width="1" shape-rendering="crispEdges"/><line x1="1117.4" y1="422.5" x2="1598.0" y2="422.5" stroke="#d0d0d0" stroke-width="1" shape-rendering="crispEdges"/><rect x="1129.86" y="382.25" width="9.45" height="39.75" fill="#8760a0"/><rect x="1140.37" y="382.25" width="9.45" height="39.75" fill="#4e93b6"/><rect x="1169.25" y="390.20" width="9.45" height="31.80" fill="#8760a0"/><rect x="1179.75" y="398.15" width="9.45" height="23.85" fill="#4e93b6"/><rect x="1190.25" y="414.05" width="9.45" height="7.95" fill="#f5bd5e"/><rect x="1208.63" y="406.10" width="9.45" height="15.90" fill="#8760a0"/><rect x="1219.13" y="382.25" width="9.45" height="39.75" fill="#4e93b6"/><rect x="1248.01" y="263.00" width="9.45" height="159.00" fill="#8760a0"/><rect x="1258.52" y="382.25" width="9.45" height="39.75" fill="#4e93b6"/><rect x="1287.40" y="374.30" width="9.45" height="47.70" fill="#8760a0"/><rect x="1297.90" y="390.20" width="9.45" height="31.80" fill="#4e93b6"/><rect x="1326.78" y="398.15" width="9.45" height="23.85" fill="#8760a0"/><rect x="1337.28" y="318.65" width="9.45" height="103.35" fill="#4e93b6"/><rect x="1366.16" y="374.30" width="9.45" height="47.70" fill="#8760a0"/><rect x="1405.55" y="390.20" width="9.45" height="31.80" fill="#8760a0"/><rect x="1444.93" y="390.20" width="9.45" height="31.80" fill="#8760a0"/><rect x="1484.31" y="382.25" width="9.45" height="39.75" fill="#8760a0"/><rect x="1523.70" y="390.20" width="9.45" height="31.80" fill="#8760a0"/><rect x="1563.08" y="326.60" width="9.45" height="95.40" fill="#8760a0"/><rect x="1573.58" y="358.40" width="9.45" height="63.60" fill="#4e93b6"/></svg>
<div class="t" style="right:602.90px;top:416px;font-size:12px;color:#666;">0</div>
<div class="t" style="right:602.90px;top:384px;font-size:12px;color:#666;">4</div>
<div class="t" style="right:602.90px;top:353px;font-size:12px;color:#666;">8</div>
<div class="t" style="right:602.90px;top:321px;font-size:12px;color:#666;">12</div>
<div class="t" style="right:602.90px;top:289px;font-size:12px;color:#666;">16</div>
<div class="t" style="right:602.90px;top:257px;font-size:12px;color:#666;">20</div>
<div class="t" style="left:845.09px;width:600px;text-align:center;top:435px;font-size:12px;color:#666;">Jan.</div>
<div class="t" style="left:884.48px;width:600px;text-align:center;top:435px;font-size:12px;color:#666;">Fév.</div>
<div class="t" style="left:923.86px;width:600px;text-align:center;top:435px;font-size:12px;color:#666;">Mars</div>
<div class="t" style="left:963.24px;width:600px;text-align:center;top:435px;font-size:12px;color:#666;">Avr.</div>
<div class="t" style="left:1002.62px;width:600px;text-align:center;top:435px;font-size:12px;color:#666;">Mai</div>
<div class="t" style="left:1042.01px;width:600px;text-align:center;top:435px;font-size:12px;color:#666;">Juin</div>
<div class="t" style="left:1081.39px;width:600px;text-align:center;top:435px;font-size:12px;color:#666;">Juil.</div>
<div class="t" style="left:1120.78px;width:600px;text-align:center;top:435px;font-size:12px;color:#666;">Août</div>
<div class="t" style="left:1160.16px;width:600px;text-align:center;top:435px;font-size:12px;color:#666;">Sep.</div>
<div class="t" style="left:1199.54px;width:600px;text-align:center;top:435px;font-size:12px;color:#666;">Oct.</div>
<div class="t" style="left:1238.92px;width:600px;text-align:center;top:435px;font-size:12px;color:#666;">Nov.</div>
<div class="t" style="left:1278.31px;width:600px;text-align:center;top:435px;font-size:12px;color:#666;">Déc.</div>
<div class="t" style="left:1047.50px;width:600px;text-align:center;top:480px;font-size:14.7px;color:#2b2b2b;">Montant de factures par mois (HT)</div>
<div style="position:absolute;left:1266px;top:511.5px;width:16px;height:13px;background:#8760a0"></div>
<div class="t" style="left:1287.50px;top:512px;font-size:12px;color:#555;">2024</div>
<div style="position:absolute;left:1323.5px;top:511.5px;width:16px;height:13px;background:#4e93b6"></div>
<div class="t" style="left:1345.30px;top:512px;font-size:12px;color:#555;">2025</div>
<div style="position:absolute;left:1381.3px;top:511.5px;width:16px;height:13px;background:#f5bd5e"></div>
<div class="t" style="left:1402.80px;top:512px;font-size:12px;color:#555;">2026</div>
<svg style="position:absolute;left:0;top:0" width="1717" height="1209" viewBox="0 0 1717 1209"><line x1="1145.4" y1="693.5" x2="1598.0" y2="693.5" stroke="#e2e2e2" stroke-width="1" shape-rendering="crispEdges"/><line x1="1145.4" y1="673.5" x2="1598.0" y2="673.5" stroke="#e2e2e2" stroke-width="1" shape-rendering="crispEdges"/><line x1="1145.4" y1="653.5" x2="1598.0" y2="653.5" stroke="#e2e2e2" stroke-width="1" shape-rendering="crispEdges"/><line x1="1145.4" y1="633.5" x2="1598.0" y2="633.5" stroke="#e2e2e2" stroke-width="1" shape-rendering="crispEdges"/><line x1="1145.4" y1="613.5" x2="1598.0" y2="613.5" stroke="#e2e2e2" stroke-width="1" shape-rendering="crispEdges"/><line x1="1145.4" y1="593.5" x2="1598.0" y2="593.5" stroke="#e2e2e2" stroke-width="1" shape-rendering="crispEdges"/><line x1="1145.4" y1="573.5" x2="1598.0" y2="573.5" stroke="#e2e2e2" stroke-width="1" shape-rendering="crispEdges"/><line x1="1145.4" y1="553.5" x2="1598.0" y2="553.5" stroke="#e2e2e2" stroke-width="1" shape-rendering="crispEdges"/><line x1="1145.4" y1="534.5" x2="1598.0" y2="534.5" stroke="#e2e2e2" stroke-width="1" shape-rendering="crispEdges"/><line x1="1153.5" y1="533" x2="1153.5" y2="701.4" stroke="#e2e2e2" stroke-width="1" shape-rendering="crispEdges"/><line x1="1190.5" y1="533" x2="1190.5" y2="701.4" stroke="#e2e2e2" stroke-width="1" shape-rendering="crispEdges"/><line x1="1227.5" y1="533" x2="1227.5" y2="701.4" stroke="#e2e2e2" stroke-width="1" shape-rendering="crispEdges"/><line x1="1264.5" y1="533" x2="1264.5" y2="701.4" stroke="#e2e2e2" stroke-width="1" shape-rendering="crispEdges"/><line x1="1301.5" y1="533" x2="1301.5" y2="701.4" stroke="#e2e2e2" stroke-width="1" shape-rendering="crispEdges"/><line x1="1338.5" y1="533" x2="1338.5" y2="701.4" stroke="#e2e2e2" stroke-width="1" shape-rendering="crispEdges"/><line x1="1375.5" y1="533" x2="1375.5" y2="701.4" stroke="#e2e2e2" stroke-width="1" shape-rendering="crispEdges"/><line x1="1412.5" y1="533" x2="1412.5" y2="701.4" stroke="#e2e2e2" stroke-width="1" shape-rendering="crispEdges"/><line x1="1449.5" y1="533" x2="1449.5" y2="701.4" stroke="#e2e2e2" stroke-width="1" shape-rendering="crispEdges"/><line x1="1486.5" y1="533" x2="1486.5" y2="701.4" stroke="#e2e2e2" stroke-width="1" shape-rendering="crispEdges"/><line x1="1523.5" y1="533" x2="1523.5" y2="701.4" stroke="#e2e2e2" stroke-width="1" shape-rendering="crispEdges"/><line x1="1560.5" y1="533" x2="1560.5" y2="701.4" stroke="#e2e2e2" stroke-width="1" shape-rendering="crispEdges"/><line x1="1153.5" y1="533" x2="1153.5" y2="701.4" stroke="#d0d0d0" stroke-width="1" shape-rendering="crispEdges"/><line x1="1145.4" y1="693.5" x2="1598.0" y2="693.5" stroke="#d0d0d0" stroke-width="1" shape-rendering="crispEdges"/><rect x="1157.60" y="686.77" width="8.89" height="6.63" fill="#8760a0"/><rect x="1167.48" y="686.53" width="8.89" height="6.87" fill="#4e93b6"/><rect x="1194.65" y="690.06" width="8.89" height="3.34" fill="#8760a0"/><rect x="1204.53" y="691.91" width="8.89" height="1.49" fill="#4e93b6"/><rect x="1214.41" y="693.13" width="8.89" height="0.27" fill="#f5bd5e"/><rect x="1231.70" y="689.02" width="8.89" height="4.38" fill="#8760a0"/><rect x="1241.58" y="685.83" width="8.89" height="7.57" fill="#4e93b6"/><rect x="1268.75" y="669.79" width="8.89" height="23.61" fill="#8760a0"/><rect x="1278.63" y="686.33" width="8.89" height="7.07" fill="#4e93b6"/><rect x="1305.80" y="686.23" width="8.89" height="7.17" fill="#8760a0"/><rect x="1315.68" y="692.20" width="8.89" height="1.20" fill="#4e93b6"/><rect x="1342.85" y="681.44" width="8.89" height="11.95" fill="#8760a0"/><rect x="1352.73" y="671.48" width="8.89" height="21.92" fill="#4e93b6"/><rect x="1379.90" y="675.47" width="8.89" height="17.93" fill="#8760a0"/><rect x="1416.95" y="679.45" width="8.89" height="13.95" fill="#8760a0"/><rect x="1454.00" y="678.46" width="8.89" height="14.94" fill="#8760a0"/><rect x="1491.05" y="673.48" width="8.89" height="19.92" fill="#8760a0"/><rect x="1528.10" y="677.46" width="8.89" height="15.94" fill="#8760a0"/><rect x="1565.15" y="546.95" width="8.89" height="146.45" fill="#8760a0"/><rect x="1575.03" y="688.42" width="8.89" height="4.98" fill="#4e93b6"/></svg>
<div class="t" style="right:574.90px;top:688px;font-size:12px;color:#666;">0</div>
<div class="t" style="right:574.90px;top:668px;font-size:12px;color:#666;">20<span style="margin-left:2px"></span>000</div>
<div class="t" style="right:574.90px;top:648px;font-size:12px;color:#666;">40<span style="margin-left:2px"></span>000</div>
<div class="t" style="right:574.90px;top:628px;font-size:12px;color:#666;">60<span style="margin-left:2px"></span>000</div>
<div class="t" style="right:574.90px;top:608px;font-size:12px;color:#666;">80<span style="margin-left:2px"></span>000</div>
<div class="t" style="right:574.90px;top:588px;font-size:12px;color:#666;">100<span style="margin-left:2px"></span>000</div>
<div class="t" style="right:574.90px;top:568px;font-size:12px;color:#666;">120<span style="margin-left:2px"></span>000</div>
<div class="t" style="right:574.90px;top:548px;font-size:12px;color:#666;">140<span style="margin-left:2px"></span>000</div>
<div class="t" style="right:574.90px;top:528px;font-size:12px;color:#666;">160<span style="margin-left:2px"></span>000</div>
<div class="t" style="left:871.93px;width:600px;text-align:center;top:706px;font-size:12px;color:#666;">Jan.</div>
<div class="t" style="left:908.98px;width:600px;text-align:center;top:706px;font-size:12px;color:#666;">Fév.</div>
<div class="t" style="left:946.03px;width:600px;text-align:center;top:706px;font-size:12px;color:#666;">Mars</div>
<div class="t" style="left:983.08px;width:600px;text-align:center;top:706px;font-size:12px;color:#666;">Avr.</div>
<div class="t" style="left:1020.12px;width:600px;text-align:center;top:706px;font-size:12px;color:#666;">Mai</div>
<div class="t" style="left:1057.17px;width:600px;text-align:center;top:706px;font-size:12px;color:#666;">Juin</div>
<div class="t" style="left:1094.22px;width:600px;text-align:center;top:706px;font-size:12px;color:#666;">Juil.</div>
<div class="t" style="left:1131.28px;width:600px;text-align:center;top:706px;font-size:12px;color:#666;">Août</div>
<div class="t" style="left:1168.33px;width:600px;text-align:center;top:706px;font-size:12px;color:#666;">Sep.</div>
<div class="t" style="left:1205.38px;width:600px;text-align:center;top:706px;font-size:12px;color:#666;">Oct.</div>
<div class="t" style="left:1242.42px;width:600px;text-align:center;top:706px;font-size:12px;color:#666;">Nov.</div>
<div class="t" style="left:1279.47px;width:600px;text-align:center;top:706px;font-size:12px;color:#666;">Déc.</div>
<div class="t" style="left:1047.50px;width:600px;text-align:center;top:752px;font-size:14.7px;color:#2b2b2b;">Montant moyen</div>
<div style="position:absolute;left:1266px;top:783.7px;width:16px;height:13px;background:#8760a0"></div>
<div class="t" style="left:1287.50px;top:784px;font-size:12px;color:#555;">2024</div>
<div style="position:absolute;left:1323.5px;top:783.7px;width:16px;height:13px;background:#4e93b6"></div>
<div class="t" style="left:1345.30px;top:784px;font-size:12px;color:#555;">2025</div>
<div style="position:absolute;left:1381.3px;top:783.7px;width:16px;height:13px;background:#f5bd5e"></div>
<div class="t" style="left:1402.80px;top:784px;font-size:12px;color:#555;">2026</div>
<svg style="position:absolute;left:0;top:0" width="1717" height="1209" viewBox="0 0 1717 1209"><line x1="1139.3" y1="965.5" x2="1598.0" y2="965.5" stroke="#e2e2e2" stroke-width="1" shape-rendering="crispEdges"/><line x1="1139.3" y1="942.5" x2="1598.0" y2="942.5" stroke="#e2e2e2" stroke-width="1" shape-rendering="crispEdges"/><line x1="1139.3" y1="920.5" x2="1598.0" y2="920.5" stroke="#e2e2e2" stroke-width="1" shape-rendering="crispEdges"/><line x1="1139.3" y1="897.5" x2="1598.0" y2="897.5" stroke="#e2e2e2" stroke-width="1" shape-rendering="crispEdges"/><line x1="1139.3" y1="874.5" x2="1598.0" y2="874.5" stroke="#e2e2e2" stroke-width="1" shape-rendering="crispEdges"/><line x1="1139.3" y1="851.5" x2="1598.0" y2="851.5" stroke="#e2e2e2" stroke-width="1" shape-rendering="crispEdges"/><line x1="1139.3" y1="828.5" x2="1598.0" y2="828.5" stroke="#e2e2e2" stroke-width="1" shape-rendering="crispEdges"/><line x1="1139.3" y1="806.5" x2="1598.0" y2="806.5" stroke="#e2e2e2" stroke-width="1" shape-rendering="crispEdges"/><line x1="1147.5" y1="805" x2="1147.5" y2="973.75" stroke="#e2e2e2" stroke-width="1" shape-rendering="crispEdges"/><line x1="1184.5" y1="805" x2="1184.5" y2="973.75" stroke="#e2e2e2" stroke-width="1" shape-rendering="crispEdges"/><line x1="1222.5" y1="805" x2="1222.5" y2="973.75" stroke="#e2e2e2" stroke-width="1" shape-rendering="crispEdges"/><line x1="1259.5" y1="805" x2="1259.5" y2="973.75" stroke="#e2e2e2" stroke-width="1" shape-rendering="crispEdges"/><line x1="1297.5" y1="805" x2="1297.5" y2="973.75" stroke="#e2e2e2" stroke-width="1" shape-rendering="crispEdges"/><line x1="1335.5" y1="805" x2="1335.5" y2="973.75" stroke="#e2e2e2" stroke-width="1" shape-rendering="crispEdges"/><line x1="1372.5" y1="805" x2="1372.5" y2="973.75" stroke="#e2e2e2" stroke-width="1" shape-rendering="crispEdges"/><line x1="1410.5" y1="805" x2="1410.5" y2="973.75" stroke="#e2e2e2" stroke-width="1" shape-rendering="crispEdges"/><line x1="1447.5" y1="805" x2="1447.5" y2="973.75" stroke="#e2e2e2" stroke-width="1" shape-rendering="crispEdges"/><line x1="1485.5" y1="805" x2="1485.5" y2="973.75" stroke="#e2e2e2" stroke-width="1" shape-rendering="crispEdges"/><line x1="1522.5" y1="805" x2="1522.5" y2="973.75" stroke="#e2e2e2" stroke-width="1" shape-rendering="crispEdges"/><line x1="1560.5" y1="805" x2="1560.5" y2="973.75" stroke="#e2e2e2" stroke-width="1" shape-rendering="crispEdges"/><line x1="1147.5" y1="805" x2="1147.5" y2="973.75" stroke="#d0d0d0" stroke-width="1" shape-rendering="crispEdges"/><line x1="1139.3" y1="965.5" x2="1598.0" y2="965.5" stroke="#d0d0d0" stroke-width="1" shape-rendering="crispEdges"/><rect x="1151.56" y="950.00" width="9.01" height="15.75" fill="#8760a0"/><rect x="1161.57" y="949.32" width="9.01" height="16.43" fill="#4e93b6"/><rect x="1189.11" y="955.31" width="9.01" height="10.44" fill="#8760a0"/><rect x="1199.13" y="958.63" width="9.01" height="7.12" fill="#4e93b6"/><rect x="1209.15" y="962.67" width="9.01" height="3.08" fill="#f5bd5e"/><rect x="1226.67" y="938.06" width="9.01" height="27.69" fill="#8760a0"/><rect x="1236.69" y="947.79" width="9.01" height="17.96" fill="#4e93b6"/><rect x="1264.23" y="952.10" width="9.01" height="13.65" fill="#8760a0"/><rect x="1274.25" y="948.88" width="9.01" height="16.87" fill="#4e93b6"/><rect x="1301.79" y="952.10" width="9.01" height="13.65" fill="#8760a0"/><rect x="1311.81" y="962.24" width="9.01" height="3.51" fill="#4e93b6"/><rect x="1339.35" y="920.11" width="9.01" height="45.64" fill="#8760a0"/><rect x="1349.36" y="946.35" width="9.01" height="19.40" fill="#4e93b6"/><rect x="1376.91" y="931.52" width="9.01" height="34.23" fill="#8760a0"/><rect x="1414.46" y="925.81" width="9.01" height="39.94" fill="#8760a0"/><rect x="1452.02" y="922.96" width="9.01" height="42.79" fill="#8760a0"/><rect x="1489.58" y="920.11" width="9.01" height="45.64" fill="#8760a0"/><rect x="1527.14" y="920.11" width="9.01" height="45.64" fill="#8760a0"/><rect x="1564.70" y="825.97" width="9.01" height="139.78" fill="#8760a0"/><rect x="1574.71" y="958.62" width="9.01" height="7.13" fill="#4e93b6"/></svg>
<div class="t" style="right:581.00px;top:960px;font-size:12px;color:#666;">0</div>
<div class="t" style="right:581.00px;top:937px;font-size:12px;color:#666;">2<span style="margin-left:2px"></span>000</div>
<div class="t" style="right:581.00px;top:914px;font-size:12px;color:#666;">4<span style="margin-left:2px"></span>000</div>
<div class="t" style="right:581.00px;top:892px;font-size:12px;color:#666;">6<span style="margin-left:2px"></span>000</div>
<div class="t" style="right:581.00px;top:869px;font-size:12px;color:#666;">8<span style="margin-left:2px"></span>000</div>
<div class="t" style="right:581.00px;top:846px;font-size:12px;color:#666;">10<span style="margin-left:2px"></span>000</div>
<div class="t" style="right:581.00px;top:823px;font-size:12px;color:#666;">12<span style="margin-left:2px"></span>000</div>
<div class="t" style="right:581.00px;top:800px;font-size:12px;color:#666;">14<span style="margin-left:2px"></span>000</div>
<div class="t" style="left:866.08px;width:600px;text-align:center;top:977px;font-size:12px;color:#666;">Jan.</div>
<div class="t" style="left:903.64px;width:600px;text-align:center;top:977px;font-size:12px;color:#666;">Fév.</div>
<div class="t" style="left:941.20px;width:600px;text-align:center;top:977px;font-size:12px;color:#666;">Mars</div>
<div class="t" style="left:978.75px;width:600px;text-align:center;top:977px;font-size:12px;color:#666;">Avr.</div>
<div class="t" style="left:1016.31px;width:600px;text-align:center;top:977px;font-size:12px;color:#666;">Mai</div>
<div class="t" style="left:1053.87px;width:600px;text-align:center;top:977px;font-size:12px;color:#666;">Juin</div>
<div class="t" style="left:1091.43px;width:600px;text-align:center;top:977px;font-size:12px;color:#666;">Juil.</div>
<div class="t" style="left:1128.99px;width:600px;text-align:center;top:977px;font-size:12px;color:#666;">Août</div>
<div class="t" style="left:1166.55px;width:600px;text-align:center;top:977px;font-size:12px;color:#666;">Sep.</div>
<div class="t" style="left:1204.10px;width:600px;text-align:center;top:977px;font-size:12px;color:#666;">Oct.</div>
<div class="t" style="left:1241.66px;width:600px;text-align:center;top:977px;font-size:12px;color:#666;">Nov.</div>
<div class="t" style="left:1279.22px;width:600px;text-align:center;top:977px;font-size:12px;color:#666;">Déc.</div>
<div style="position:absolute;left:1318px;top:604px;width:381px;height:520.5px;border-radius:16px;background:#fff;box-shadow:0 12px 44px rgba(0,0,0,0.17);overflow:hidden"><div style="position:absolute;left:-1318px;top:-604px;width:1717px;height:1209px"><div style="position:absolute;left:1318px;top:673px;width:381px;height:377px;background:#f8f8f8;border-left:1px solid #dcdcdc;border-right:1px solid #dcdcdc"></div>
<div style="position:absolute;left:1684.5px;top:673px;width:13.5px;height:377px;background:#f7f7f7;border-left:1px solid #e6e6e6"></div>
<div style="position:absolute;left:1688.4px;top:924px;width:7.4px;height:67.4px;background:#c2c2c2;border-radius:4px"></div>
<div style="position:absolute;left:1356px;top:600px;width:308px;height:120.6px;background:linear-gradient(135deg,#1f88e3 0%,#1a73d6 50%,#1565c8 100%);border-radius:16px 16px 4px 16px"></div>
<div class="t" style="left:1372.70px;top:649px;font-size:14px;color:#fff;">Crée une facture brouillon pour le client</div>
<div class="t" style="left:1372.70px;top:670px;font-size:14px;color:#fff;">Dupont, 3h de consulting à 90€/h (21% de</div>
<div class="t" style="left:1372.70px;top:691px;font-size:14px;color:#fff;">TVA)</div>
<div class="t" style="right:61.00px;top:727px;font-size:10.8px;color:#8a8a8a;">07:32</div>
<div style="position:absolute;left:1339.5px;top:756.4px;width:309px;height:340px;background:#fff;border:1px solid #dcdcdc;border-radius:16px"></div>
<div class="t" style="left:1356.50px;top:772px;font-size:14px;color:#222;">Parfait ! J'ai créé la facture brouillon pour le</div>
<div class="t" style="left:1356.50px;top:793px;font-size:14px;color:#222;">client Dupont :</div>
<div class="t" style="left:1356.50px;top:835px;font-size:14px;color:#222;"><b>Facture créée :</b></div>
<div class="t" style="left:1356.50px;top:856px;font-size:14px;color:#222;">- <b>ID :</b> 258</div>
<div class="t" style="left:1356.50px;top:877px;font-size:14px;color:#222;">- <b>Client :</b> Dupont (ID: 39)</div>
<div class="t" style="left:1356.50px;top:898px;font-size:14px;color:#222;">- <b>Statut :</b> Brouillon</div>
<div class="t" style="left:1356.50px;top:919px;font-size:14px;color:#222;">- <b>Ligne ajoutée :</b> 3h de consulting à 90€/h</div>
<div class="t" style="left:1356.50px;top:940px;font-size:14px;color:#222;">avec TVA 21%</div>
<div class="t" style="left:1356.50px;top:961px;font-size:14px;color:#222;">- <b>Total HT :</b> 270€</div>
<div class="t" style="left:1356.50px;top:982px;font-size:14px;color:#222;">- <b>TVA (21%) :</b> 56,70€</div>
<div class="t" style="left:1356.50px;top:1003px;font-size:14px;color:#222;">- <b>Total TTC :</b> 326,70€</div>
<div class="t" style="left:1356.50px;top:1045px;font-size:14px;color:#222;">Tu peux consulter et modifier cette facture</div>
<div style="position:absolute;left:1319px;top:600px;width:380px;height:73.6px;background:#539c4a"></div>
<svg style="position:absolute;left:1339.5px;top:619px" width="19" height="19" viewBox="0 0 20 20"><defs><linearGradient id="rh" x1="0" y1="0" x2="0" y2="1"><stop offset="0" stop-color="#eefbfc"/><stop offset="0.35" stop-color="#d8f0f4"/><stop offset="0.7" stop-color="#5e9fb5"/><stop offset="1" stop-color="#1d6281"/></linearGradient><radialGradient id="ab" cx="0.5" cy="0.4" r="0.6"><stop offset="0" stop-color="#ffe14a"/><stop offset="1" stop-color="#f39a1e"/></radialGradient></defs><rect x="0.4" y="8.2" width="2.6" height="6.2" rx="1" fill="#b3261e"/><rect x="17.2" y="8.2" width="2.6" height="6.2" rx="1" fill="#b3261e"/><circle cx="10.1" cy="1.8" r="1.8" fill="url(#ab)"/><ellipse cx="10.1" cy="4" rx="2" ry="1.1" fill="#5b3a8c"/><rect x="2.3" y="4.2" width="15.7" height="15.3" rx="4" fill="url(#rh)"/><circle cx="6.4" cy="9.9" r="2.4" fill="#ffffff" stroke="#2aa6d6" stroke-width="1.1"/><circle cx="13.9" cy="9.9" r="2.4" fill="#ffffff" stroke="#2aa6d6" stroke-width="1.1"/><path d="M4.6,10.6 Q6.4,12.3 8.2,10.6" fill="none" stroke="#1b5f86" stroke-width="0.8"/><path d="M12.1,10.6 Q13.9,12.3 15.7,10.6" fill="none" stroke="#1b5f86" stroke-width="0.8"/><path d="M9.1,12.6 L10.1,10.8 L11.1,12.6 Z" fill="#e0392b"/><rect x="5.6" y="13.9" width="8" height="2.6" rx="0.5" fill="#3b4a54"/><circle cx="7.6" cy="15.2" r="0.6" fill="#d9e2e6"/><circle cx="9.6" cy="15.2" r="0.6" fill="#d9e2e6"/><circle cx="11.6" cy="15.2" r="0.6" fill="#d9e2e6"/></svg>
<div class="t" style="left:1367.70px;top:622px;font-size:15.7px;color:#fff;font-weight:700;">Dalfred</div>
<div style="position:absolute;left:1339px;top:646.8px;width:8px;height:8px;background:#7acb6e;border-radius:50%"></div>
<div class="t" style="left:1352.40px;top:645px;font-size:10.8px;color:#fff;">En ligne</div>
<div style="position:absolute;left:1579px;top:625px;width:28px;height:28px;background:rgba(255,255,255,0.2);border-radius:50%"></div>
<div style="position:absolute;left:1615px;top:625px;width:28px;height:28px;background:rgba(255,255,255,0.2);border-radius:50%"></div>
<div style="position:absolute;left:1650.8px;top:625px;width:28px;height:28px;background:rgba(255,255,255,0.2);border-radius:50%"></div>
<svg style="position:absolute;left:1589px;top:634.8px" width="8" height="8" viewBox="0 0 10 10"><path d="M2,8 L8,2" stroke="#fff" stroke-width="1.3"/><path d="M5,1.2 H8.8 V5 Z" fill="#fff"/><path d="M1.2,5 V8.8 H5 Z" fill="#fff"/></svg>
<svg style="position:absolute;left:1621px;top:629.5px" width="16" height="18" viewBox="0 0 16 18"><defs><linearGradient id="tg" x1="0" x2="1"><stop offset="0" stop-color="#8f9aa6"/><stop offset="0.5" stop-color="#c8d0d8"/><stop offset="1" stop-color="#7d8894"/></linearGradient></defs><path d="M1.5,2.5 L3,17 H13 L14.5,2.5 Z" fill="url(#tg)" opacity="0.75"/><path d="M3,5 L13,15 M13,5 L3,15 M2.5,9 L8,15 M13.5,9 L8,15 M2.5,9 L8,4 M13.5,9 L8,4" stroke="#6b7580" stroke-width="0.5" fill="none"/><ellipse cx="8" cy="2.5" rx="6.8" ry="1.4" fill="none" stroke="#77818c" stroke-width="1"/><rect x="3" y="16" width="10" height="1.5" fill="#6b7580"/></svg>
<svg style="position:absolute;left:1661px;top:635.2px" width="7.6" height="7.6" viewBox="0 0 10 10"><path d="M1.2,1.2 L8.8,8.8 M8.8,1.2 L1.2,8.8" stroke="#fff" stroke-width="2.4"/></svg>
<div style="position:absolute;left:1318px;top:1049px;width:381px;height:75.5px;background:#fff;border-top:1px solid #dedede;border-left:1px solid #e2e2e2;border-right:1px solid #e2e2e2;border-bottom:1px solid #d8d8d8;border-radius:0 0 16px 16px"></div>
<div style="position:absolute;left:1334px;top:1066.3px;width:299.5px;height:41.4px;border:1.2px solid #5aa758;border-radius:21px;background:#fff"></div>
<div style="position:absolute;left:1350px;top:1077px;width:1.3px;height:16px;background:#111"></div>
<div class="t" style="left:1351.80px;top:1078px;font-size:14px;color:#bdbdbd;">Posez votre question...</div>
<div style="position:absolute;left:1643.8px;top:1069px;width:40px;height:40px;background:linear-gradient(135deg,#5aa350,#478f42);border-radius:50%"></div>
<svg style="position:absolute;left:1655px;top:1082px" width="18" height="13" viewBox="0 0 18 13"><path d="M0,0 L17,6.5 L0,13 L4,6.5 Z" fill="#fff"/></svg>
</div></div>
<div style="position:absolute;left:1639.7px;top:1134.9px;width:60px;height:60px;background:linear-gradient(135deg,#f4572c,#e84a33);border-radius:50%;box-shadow:0 4px 20px rgba(76,175,80,0.25)"></div>
<svg style="position:absolute;left:1664px;top:1159.2px" width="11.5" height="11.5" viewBox="0 0 11.5 11.5"><path d="M1.4,1.4 L10.1,10.1 M10.1,1.4 L1.4,10.1" stroke="#fff" stroke-width="2.8"/></svg>
<svg style="position:absolute;left:0;top:1199px" width="6" height="10" viewBox="0 0 6 10"><path d="M0,0 Q1,6 5.5,10 H0 Z" fill="#1f66a8"/></svg>
<svg style="position:absolute;left:1712px;top:1204px" width="5" height="5" viewBox="0 0 5 5"><path d="M5,0 Q4,3 0.5,5 H5 Z" fill="#8a8a8a"/></svg>

</div>
</body></html>
